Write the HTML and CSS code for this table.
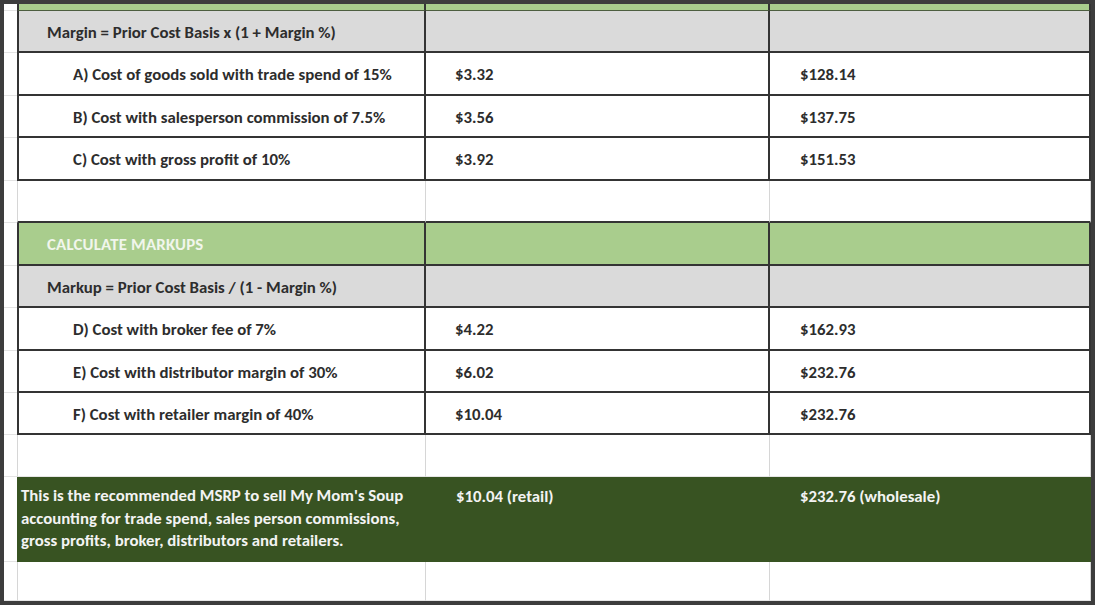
FILE: index.html
```html
<!DOCTYPE html>
<html>
<head>
<meta charset="utf-8">
<link rel="stylesheet" href="styles.css">
</head>
<body>
<div class="frame">
  <div class="sheet">
    <div class="row r-stripe">
      <div class="rn"></div>
      <div class="c c1 green"></div>
      <div class="c green"></div>
      <div class="c green"></div>
    </div>
    <div class="row r42">
      <div class="rn"></div>
      <div class="c c1 gray head">Margin = Prior Cost Basis x (1 + Margin %)</div>
      <div class="c gray"></div>
      <div class="c gray"></div>
    </div>
    <div class="row r43">
      <div class="rn"></div>
      <div class="c c1 item">A) Cost of goods sold with trade spend of 15%</div>
      <div class="c val2">$3.32</div>
      <div class="c val3">$128.14</div>
    </div>
    <div class="row r42">
      <div class="rn"></div>
      <div class="c c1 item">B) Cost with salesperson commission of 7.5%</div>
      <div class="c val2">$3.56</div>
      <div class="c val3">$137.75</div>
    </div>
    <div class="row r43">
      <div class="rn"></div>
      <div class="c c1 item">C) Cost with gross profit of 10%</div>
      <div class="c val2">$3.92</div>
      <div class="c val3">$151.53</div>
    </div>
    <div class="row r42 blank">
      <div class="rn"></div>
      <div class="c c1 dark-bottom"></div>
      <div class="c dark-bottom"></div>
      <div class="c dark-bottom"></div>
    </div>
    <div class="row r43">
      <div class="rn"></div>
      <div class="c c1 green head title">CALCULATE MARKUPS</div>
      <div class="c green"></div>
      <div class="c green"></div>
    </div>
    <div class="row r42">
      <div class="rn"></div>
      <div class="c c1 gray head">Markup = Prior Cost Basis / (1 - Margin %)</div>
      <div class="c gray"></div>
      <div class="c gray"></div>
    </div>
    <div class="row r43">
      <div class="rn"></div>
      <div class="c c1 item">D) Cost with broker fee of 7%</div>
      <div class="c val2">$4.22</div>
      <div class="c val3">$162.93</div>
    </div>
    <div class="row r42">
      <div class="rn"></div>
      <div class="c c1 item">E) Cost with distributor margin of 30%</div>
      <div class="c val2">$6.02</div>
      <div class="c val3">$232.76</div>
    </div>
    <div class="row r42">
      <div class="rn"></div>
      <div class="c c1 item">F) Cost with retailer margin of 40%</div>
      <div class="c val2">$10.04</div>
      <div class="c val3">$232.76</div>
    </div>
    <div class="row r42 blank">
      <div class="rn"></div>
      <div class="c c1"></div>
      <div class="c"></div>
      <div class="c"></div>
    </div>
    <div class="row r85 summary">
      <div class="rn"></div>
      <div class="c c1 sum-text">This is the recommended MSRP to sell My Mom's Soup<br>accounting for trade spend, sales person commissions,<br>gross profits, broker, distributors and retailers.</div>
      <div class="c val2">$10.04 (retail)</div>
      <div class="c val3">$232.76 (wholesale)</div>
    </div>
    <div class="row r39 blank">
      <div class="rn"></div>
      <div class="c c1"></div>
      <div class="c"></div>
      <div class="c"></div>
    </div>
  </div>
</div>
</body>
</html>
```
FILE: styles.css
```css
html, body {
  margin: 0;
  padding: 0;
  background: #ffffff;
}
body {
  width: 1098px;
  height: 608px;
  overflow: hidden;
  font-family: Carlito, Calibri, Lato, "Liberation Sans", sans-serif;
  font-weight: 700;
  font-size: 16.8px;
  color: #2d2d2d;
}
.frame {
  box-sizing: border-box;
  width: 1095px;
  height: 605px;
  border: 4px solid #3d3d3d;
  background: #ffffff;
  overflow: hidden;
}
.sheet {
  display: flex;
  flex-direction: column;
}
.row {
  display: grid;
  grid-template-columns: 13px 409px 344px 321px;
}
.r-stripe { height: 7px; }
.r42 { height: 42px; }
.r43 { height: 43px; }
.r85 { height: 85px; }
.r39 { height: 39px; }

.rn {
  box-sizing: border-box;
  border-bottom: 1px solid #e3e3e3;
  background: #ffffff;
}
.c {
  box-sizing: border-box;
  border-right: 2px solid #343434;
  border-bottom: 2px solid #343434;
  display: flex;
  align-items: center;
  white-space: nowrap;
  padding-top: 2px;
}
.c1 {
  border-left: 2px solid #343434;
}
.r-stripe .c {
  border-bottom: 1px solid #4d5e40;
  padding-top: 0;
}
.green { background: #a9cd8d; }
.gray { background: #dadada; }
.head { padding-left: 28px; }
.item { padding-left: 54px; }
.val2 { padding-left: 29px; }
.val3 { padding-left: 30px; }
.title {
  color: #f1f6ec;
  letter-spacing: 0.2px;
}

.blank .c {
  border-right: 1px solid #d6d6d6;
  border-bottom: 1px solid #e6e6e6;
}
.blank .c1 {
  border-left: 1px solid #d6d6d6;
}
.blank .c.dark-bottom {
  border-bottom: 2px solid #343434;
}

.summary .c {
  background: #385322;
  border: none;
  color: #f3f3f3;
  align-items: flex-start;
  padding-top: 9px;
}
.summary .c1 {
  padding-left: 4px;
}
.summary .val2 { padding-left: 30px; }
.summary .val3 { padding-left: 30px; }
.sum-text {
  display: block;
  white-space: nowrap;
  line-height: 22.5px;
}
.summary .sum-text {
  padding-top: 8px;
}
```
